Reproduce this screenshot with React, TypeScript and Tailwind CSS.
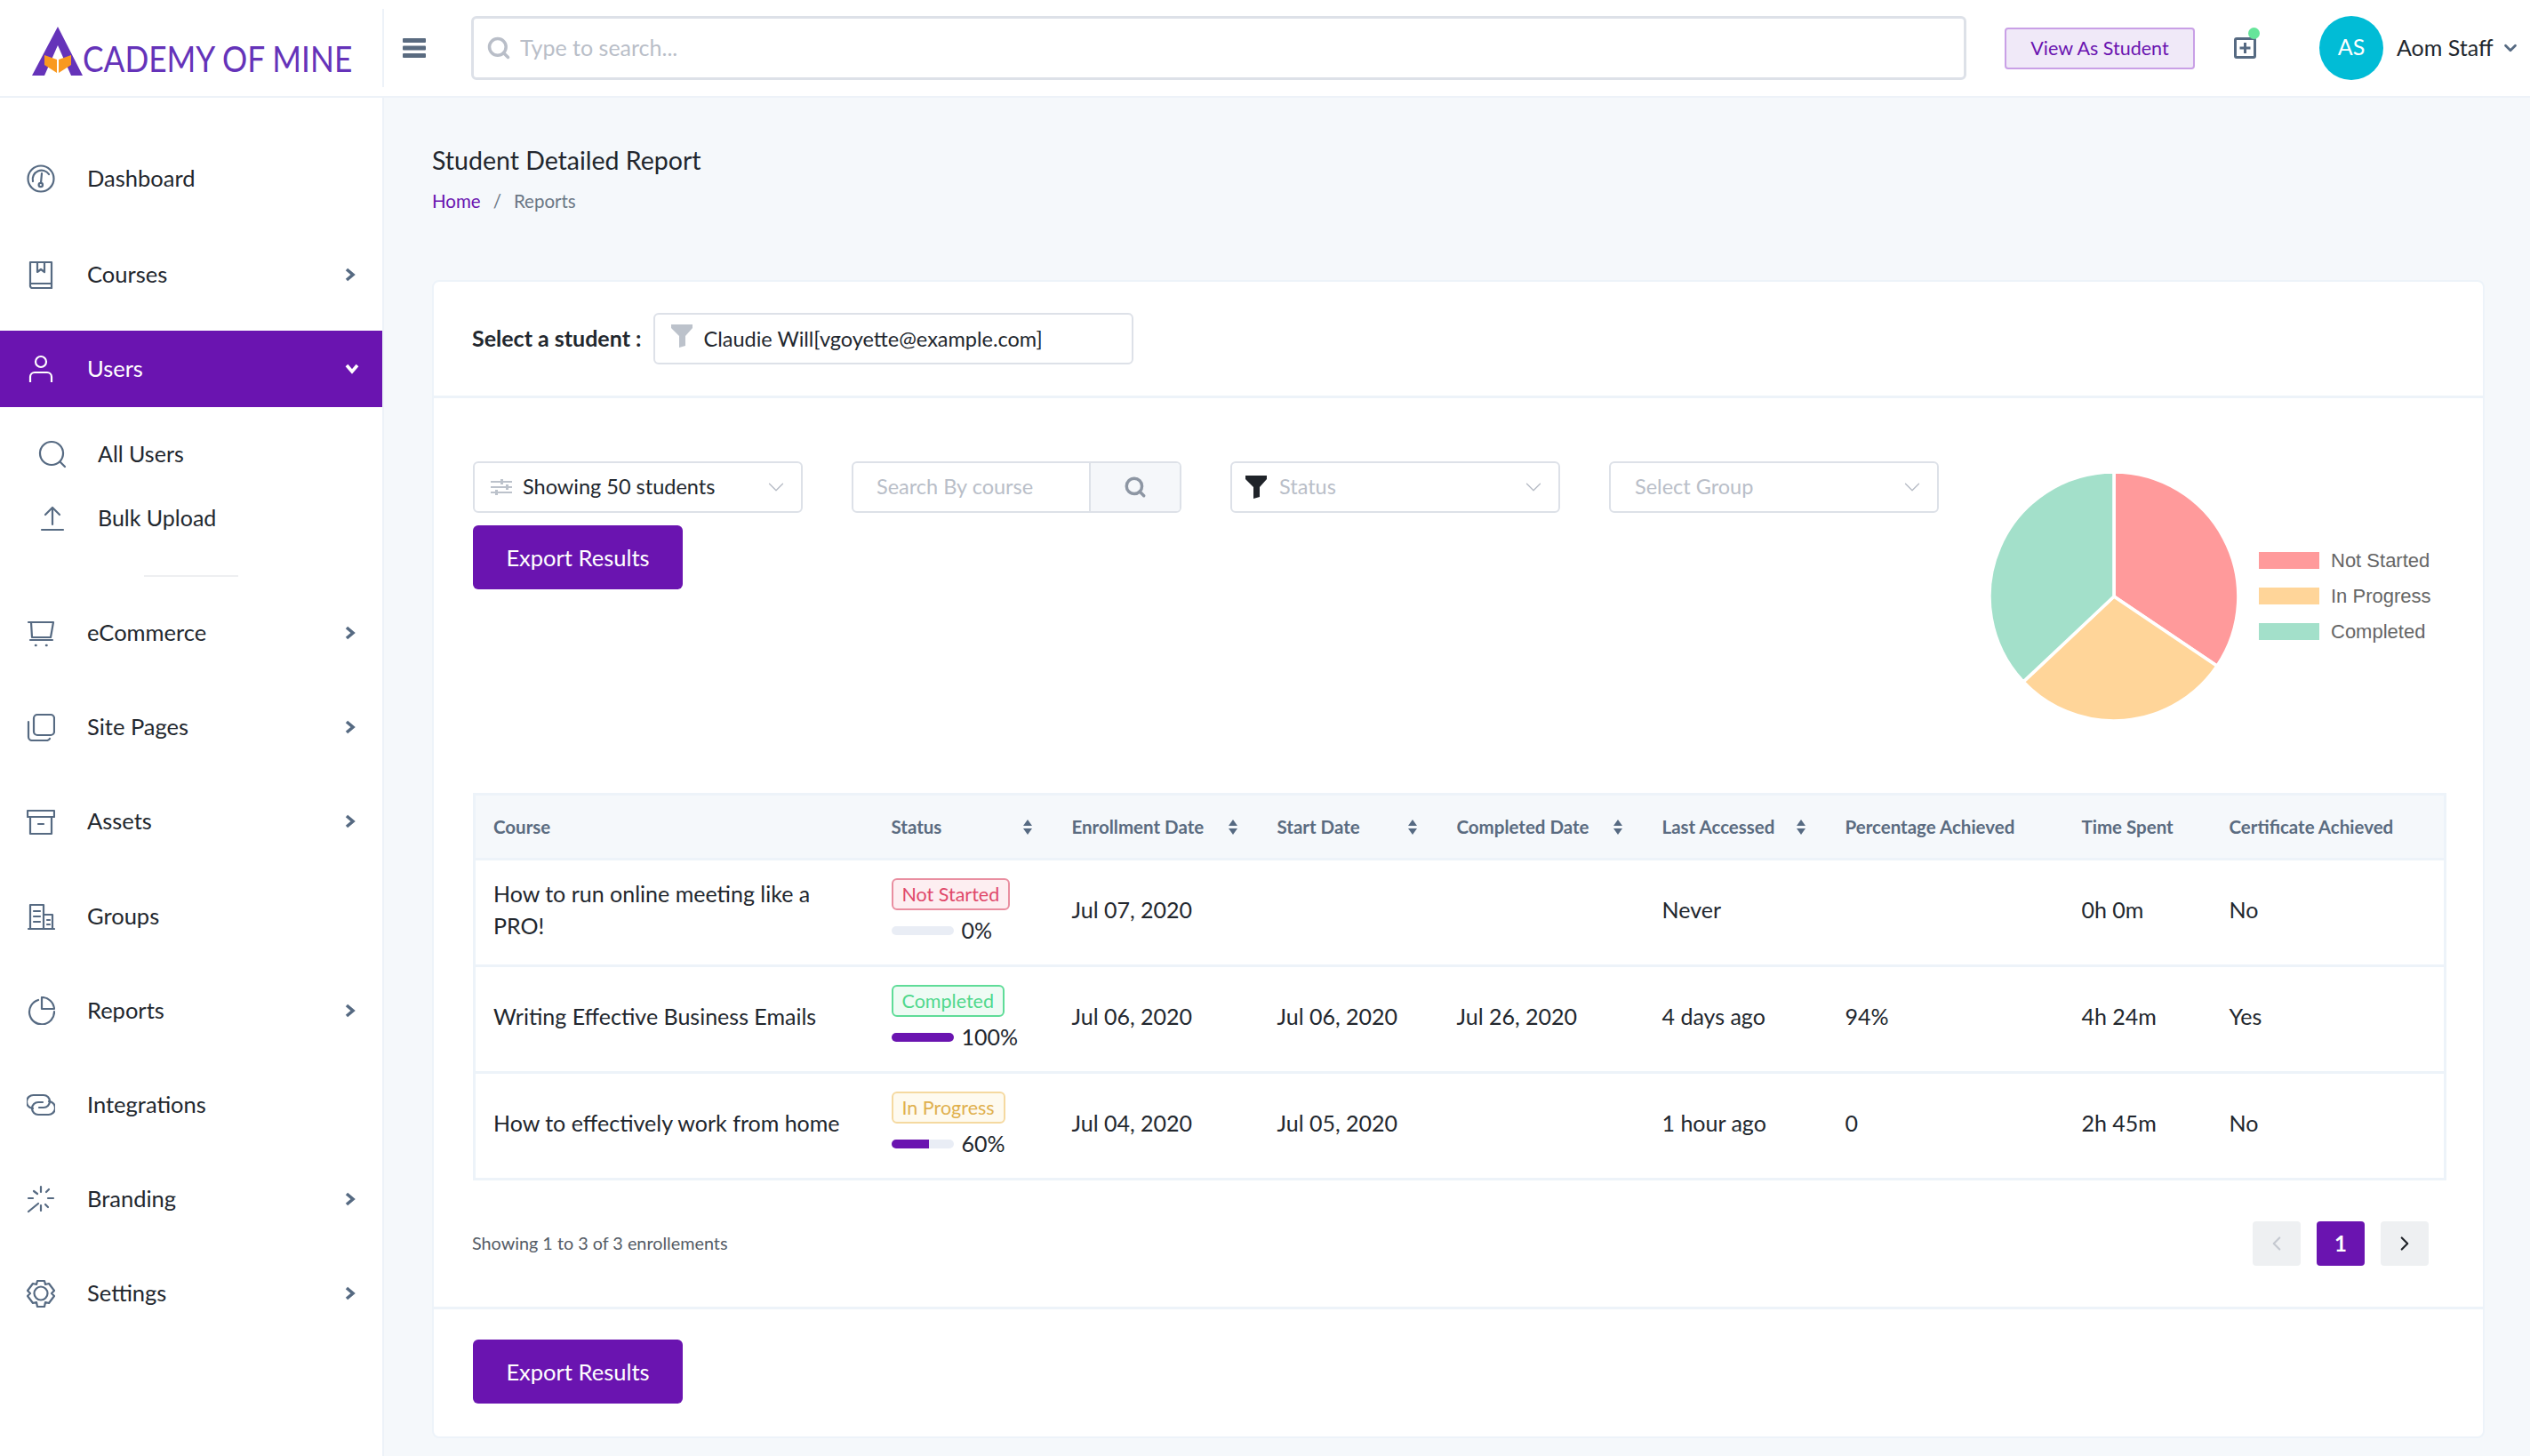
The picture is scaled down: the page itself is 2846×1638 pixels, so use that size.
import { ChevronDown, ChevronLeft, ChevronRight, Search } from "lucide-react";
import type { ReactNode } from "react";

const LINE = "#566a82";

function Ico({ children, className = "" }: { children: ReactNode; className?: string }) {
  return (
    <svg viewBox="0 0 32 32" fill="none" stroke={LINE} strokeWidth="2.2" strokeLinecap="round" strokeLinejoin="round" className={`h-8 w-8 shrink-0 ${className}`}>
      {children}
    </svg>
  );
}

const icons: Record<string, ReactNode> = {
  dashboard: (
    <Ico>
      <circle cx="16" cy="16" r="14.5" />
      <path d="M7 19a10 10 0 0 1 18 -8" />
      <path d="M17 10l-1 11" />
      <circle cx="15.8" cy="23" r="2.2" />
    </Ico>
  ),
  courses: (
    <Ico>
      <path d="M4 28V2h24v29H6a2.5 2.5 0 0 1 -2 -3z" />
      <path d="M4 26h24" />
      <path d="M12 2v11l4 -3 4 3V2" />
    </Ico>
  ),
  user: (
    <Ico>
      <circle cx="16" cy="8" r="6" />
      <path d="M4 31v-6a5 5 0 0 1 5 -5h14a5 5 0 0 1 5 5v6" />
    </Ico>
  ),
  allUsers: (
    <Ico>
      <circle cx="15" cy="15" r="13" />
      <path d="M25 25l5 5" />
    </Ico>
  ),
  upload: (
    <Ico>
      <path d="M4 29h24" />
      <path d="M16 23V6" />
      <path d="M8 12l8 -8 8 8" />
    </Ico>
  ),
  cart: (
    <Ico>
      <path d="M2 4h28l-3 17H6L5 4" />
      <path d="M4 24h25" />
      <path d="M10 30h.5M22 30h.5" strokeWidth="2.5" />
    </Ico>
  ),
  copy: (
    <Ico>
      <rect x="8" y="2" width="23" height="23" rx="4" />
      <path d="M2 10v17a4 4 0 0 0 4 4h17a4 4 0 0 0 3 -2" />
    </Ico>
  ),
  archive: (
    <Ico>
      <path d="M1 4h30v7H1z" />
      <path d="M4 11v19h24V11" />
      <path d="M13 19h6" />
    </Ico>
  ),
  building: (
    <Ico>
      <path d="M2 30h29" />
      <path d="M4 30V3h15v27" />
      <path d="M19 14h10v16" />
      <path d="M8 10h7M8 16h7M8 22h7M23 20h3M23 25h3" />
    </Ico>
  ),
  pie: (
    <Ico>
      <path d="M13 4a14 14 0 1 0 18 13" />
      <path d="M17 1a14 14 0 0 1 14 13H17z" />
    </Ico>
  ),
  link: (
    <Ico>
      <path d="M7 20A7.5 7.5 0 0 1 8 5h11a7 7 0 0 1 0 14h-5" />
      <path d="M25 12a7.5 7.5 0 0 1 -1 15H13a7 7 0 0 1 0 -14h5" />
    </Ico>
  ),
  branding: (
    <Ico>
      <path d="M16 2v6M16 23v6M24 15h6M2 15h5M22 8l3 -3M21 22l3 3M8 7l4 3M2 30l11 -9" />
    </Ico>
  ),
  settings: (
    <Ico>
      <circle cx="16" cy="16" r="7.5" />
      <path d="M12 2h8l1 4 4 -1 6 8-3 3 3 3-6 8-4 -1-1 5h-8l-1 -5-4 1-6 -8 3 -3-3 -3 6 -8 4 1z" />
    </Ico>
  ),
};

function NavChevron({ white }: { white?: boolean }) {
  return white ? (
    <svg viewBox="0 0 16 12" className="h-[12px] w-[16px]" fill="none" stroke="#fff" strokeWidth="3.6">
      <path d="M2 2l6 7 6 -7" />
    </svg>
  ) : (
    <svg viewBox="0 0 12 16" className="h-[16px] w-[12px]" fill="none" stroke={LINE} strokeWidth="3.6">
      <path d="M2 2l7 6 -7 6" />
    </svg>
  );
}

function NavRow({ icon, label, arrow = true }: { icon: string; label: string; arrow?: boolean }) {
  return (
    <div className="flex h-[106px] items-center pl-[30px] pr-[30px]">
      {icons[icon]}
      <span className="ml-9 -mt-[2px] flex-1 text-[25.5px] text-[#22272e]">{label}</span>
      {arrow && <NavChevron />}
    </div>
  );
}

function SortIcon() {
  return (
    <svg viewBox="0 0 12 17" className="h-[17px] w-[12px] shrink-0" fill="#566a82">
      <path d="M6 0l5 7H1zM6 17l5 -7H1z" />
    </svg>
  );
}

function Funnel({ color }: { color: string }) {
  return (
    <svg viewBox="0 0 24 26" className="h-[26px] w-[24px] shrink-0" fill={color}>
      <path d="M0 0h24v4l-8 9v11l-7 2V13L0 4z" />
    </svg>
  );
}

function Select({ label, placeholder = true, left, pad = "pl-[18px]" }: { label: string; placeholder?: boolean; left?: ReactNode; pad?: string }) {
  return (
    <div className={`flex h-[58px] w-[371px] items-center rounded-md border-2 border-[#dde1e8] bg-white pr-[13px] ${pad}`}>
      {left}
      <span className={`flex-1 text-[23.5px] ${placeholder ? "text-[#b9bec8]" : "text-[#22272e]"}`}>{label}</span>
      <ChevronDown className="h-[30px] w-[30px] text-[#b5bac4]" strokeWidth={1} />
    </div>
  );
}

function ExportButton() {
  return (
    <button type="button" className="flex h-[72px] w-[236px] items-center justify-center rounded-md bg-[#6a14b0] text-[25.5px] text-white">
      Export Results
    </button>
  );
}

const BADGE = {
  "Not Started": "border-[#e98ea0] bg-[#fdeef1] text-[#e0486a]",
  Completed: "border-[#5fdc98] bg-[#eefbf4] text-[#4fd88c]",
  "In Progress": "border-[#f5d9a0] bg-[#fefaef] text-[#e0b04d]",
};

const ROWS = [
  { course: "How to run online meeting like a PRO!", status: "Not Started", pct: 0, enrolled: "Jul 07, 2020", start: "", done: "", last: "Never", score: "", time: "0h 0m", cert: "No" },
  { course: "Writing Effective Business Emails", status: "Completed", pct: 100, enrolled: "Jul 06, 2020", start: "Jul 06, 2020", done: "Jul 26, 2020", last: "4 days ago", score: "94%", time: "4h 24m", cert: "Yes" },
  { course: "How to effectively work from home", status: "In Progress", pct: 60, enrolled: "Jul 04, 2020", start: "Jul 05, 2020", done: "", last: "1 hour ago", score: "0", time: "2h 45m", cert: "No" },
] as const;

const COLS: { label: string; w: number; sort?: boolean }[] = [
  { label: "Course", w: 448 },
  { label: "Status", w: 202, sort: true },
  { label: "Enrollment Date", w: 231, sort: true },
  { label: "Start Date", w: 202, sort: true },
  { label: "Completed Date", w: 231, sort: true },
  { label: "Last Accessed", w: 206, sort: true },
  { label: "Percentage Achieved", w: 266 },
  { label: "Time Spent", w: 166 },
  { label: "Certificate Achieved", w: 265 },
];

function Pie() {
  const r = 139;
  const pt = (deg: number) => {
    const a = (deg * Math.PI) / 180;
    return `${(r + r * Math.sin(a)).toFixed(1)} ${(r - r * Math.cos(a)).toFixed(1)}`;
  };
  const slice = (a: number, b: number, c: string) => (
    <path d={`M${r} ${r}L${pt(a)}A${r} ${r} 0 ${b - a > 180 ? 1 : 0} 1 ${pt(b)}Z`} fill={c} stroke="#fff" strokeWidth="3.6" />
  );
  return (
    <svg viewBox="0 0 278 278" className="h-[280px] w-[280px]">
      {slice(0, 124, "#ff9a9b")}
      {slice(124, 226.7, "#ffd599")}
      {slice(226.7, 360, "#a3e0ca")}
    </svg>
  );
}

export default function App() {
  return (
    <div className="flex h-[1638px] w-[2846px] flex-col overflow-hidden bg-[#f5f8fb] font-['Lato',sans-serif] text-[#22272e]">
      <header className="flex h-[110px] shrink-0 items-center border-b-2 border-[#edf2f8] bg-white">
        <div className="flex h-[88px] w-[432px] shrink-0 items-center border-r-2 border-[#edf2f8] pl-[36px]">
          <svg viewBox="0 0 57 55" className="mt-[6px] h-[55px] w-[57px] shrink-0">
            <path d="M29 0L57 55H44L29 21 14 55H0z" fill="#6533b9" />
            <path d="M14 32l14 5v15l-14 -9zM44 32l-14 5v15l14 -9z" fill="#f9991f" />
          </svg>
          <span className="mt-[22px] origin-left scale-x-[0.86] whitespace-nowrap text-[41px] leading-none text-[#6533b9]">CADEMY OF MINE</span>
        </div>
        <svg viewBox="0 0 26 22" className="ml-[21px] h-[22px] w-[26px] shrink-0" fill="#5a6b80">
          <rect width="26" height="5" rx="1" />
          <rect y="8.5" width="26" height="5" rx="1" />
          <rect y="17" width="26" height="5" rx="1" />
        </svg>
        <div className="ml-[51px] flex h-[72px] w-[1682px] items-center rounded-md border-[3px] border-[#dde1e8] pl-[14px]">
          <Search className="h-[28px] w-[28px] text-[#b9bec8]" strokeWidth={3} />
          <span className="ml-[10px] text-[25px] text-[#b9bec8]">Type to search...</span>
        </div>
        <button type="button" className="ml-[43px] flex h-[47px] w-[214px] items-center justify-center rounded-[4px] border-2 border-[#c9a0e6] bg-[#f0e9f8] text-[21.5px] text-[#6a14b0]">
          View As Student
        </button>
        <div className="relative ml-[44px] h-[24px] w-[25px] rounded-[3px] border-[3px] border-[#566a82]">
          <svg viewBox="0 0 19 18" className="h-full w-full" stroke="#566a82" strokeWidth="3">
            <path d="M9.5 3v12M3.5 9h12" />
          </svg>
          <span className="absolute -right-[7px] -top-[14px] h-[13px] w-[13px] rounded-full bg-[#66e59a]" />
        </div>
        <div className="ml-[71px] flex h-[72px] w-[72px] items-center justify-center rounded-full bg-[#01bcd6] pb-[2px] text-[25px] text-white">AS</div>
        <span className="ml-[15px] text-[25px] text-[#22272e]">Aom Staff</span>
        <ChevronDown className="ml-[8px] h-[22px] w-[22px] text-[#566a82]" strokeWidth={3} />
      </header>

      <div className="flex min-h-0 flex-1">
        <aside className="w-[432px] shrink-0 border-r-2 border-[#edf2f8] bg-white pt-[38px]">
          <NavRow icon="dashboard" label="Dashboard" arrow={false} />
          <div className="h-[2px]" />
          <NavRow icon="courses" label="Courses" />
          <div className="my-[10px] flex h-[86px] items-center bg-[#6a14b0] pl-[30px] pr-[26px] text-white">
            <svg viewBox="0 0 32 32" fill="none" stroke="#fff" strokeWidth="2.2" className="h-8 w-8 shrink-0">
              <circle cx="16" cy="8" r="6" />
              <path d="M4 31v-6a5 5 0 0 1 5 -5h14a5 5 0 0 1 5 5v6" />
            </svg>
            <span className="ml-9 -mt-[2px] flex-1 text-[25.5px]">Users</span>
            <NavChevron white />
          </div>
          <div className="pt-[7px]">
            <div className="flex h-[72px] items-center pl-[43px]">
              {icons.allUsers}
              <span className="ml-[35px] text-[25px]">All Users</span>
            </div>
            <div className="flex h-[72px] items-center pl-[43px]">
              {icons.upload}
              <span className="ml-[35px] text-[25px]">Bulk Upload</span>
            </div>
          </div>
          <div className="ml-[162px] mt-[28px] h-[2px] w-[106px] bg-[#eeeff1]" />
          <div className="mt-[10px]">
            <NavRow icon="cart" label="eCommerce" />
            <NavRow icon="copy" label="Site Pages" />
            <NavRow icon="archive" label="Assets" />
            <div className="h-[1px]" />
            <NavRow icon="building" label="Groups" arrow={false} />
            <NavRow icon="pie" label="Reports" />
            <NavRow icon="link" label="Integrations" arrow={false} />
            <NavRow icon="branding" label="Branding" />
            <NavRow icon="settings" label="Settings" />
          </div>
        </aside>

        <main className="min-w-0 flex-1 pl-[54px] pr-[51px]">
          <h1 className="mt-[50px] text-[28.5px] leading-[40px] text-[#22272e]">Student Detailed Report</h1>
          <div className="mt-[11px] flex text-[20.5px] leading-[30px] text-[#6b7785]">
            <span className="text-[#6a14b0]">Home</span>
            <span className="mx-[14px]">/</span>
            <span>Reports</span>
          </div>

          <section className="mt-[74px] h-[1303px] rounded-lg border-2 border-[#edf3f9] bg-white">
            <div className="flex h-[131px] items-center border-b-[3px] border-[#edf3f9] pl-[43px]">
              <span className="text-[25px] font-bold text-[#22272e]">Select a student :</span>
              <div className="ml-[14px] flex h-[58px] w-[540px] items-center rounded-md border-2 border-[#dde1e8] pl-[18px]">
                <span className="-mt-[6px] flex"><Funnel color="#bcc2cb" /></span>
                <span className="ml-[12px] mt-[2px] text-[23.5px] text-[#22272e]">Claudie Will[vgoyette@example.com]</span>
              </div>
            </div>

            <div className="flex h-[444px]">
              <div className="w-[1700px] shrink-0 pl-[44px] pt-[71px]">
                <div className="flex gap-[55px]">
                  <Select
                    label="Showing 50 students"
                    placeholder={false}
                    left={
                      <svg viewBox="0 0 24 18" className="mr-[12px] h-[18px] w-[24px] shrink-0" fill="#bcc2cb">
                        <path d="M0 2h24v2H0zM0 8h24v2H0zM0 14h24v2H0zM11 0h3v6h-3zM17 6h3v6h-3zM5 12h3v6H5z" />
                      </svg>
                    }
                  />
                  <div className="flex h-[58px] w-[371px] items-stretch overflow-hidden rounded-md border-2 border-[#dde1e8]">
                    <span className="flex flex-1 items-center pl-[26px] text-[23.5px] text-[#b9bec8]">Search By course</span>
                    <span className="flex w-[102px] items-center justify-center border-l-2 border-[#dde1e8] bg-[#f5f7fa]">
                      <Search className="h-[26px] w-[26px] text-[#8d96a3]" strokeWidth={3.2} />
                    </span>
                  </div>
                  <Select label="Status" left={<span className="mr-[14px] -ml-[3px] flex"><Funnel color="#1f2329" /></span>} />
                  <Select label="Select Group" pad="pl-[27px]" />
                </div>
                <div className="mt-[14px]">
                  <ExportButton />
                </div>
              </div>
              <div className="flex pl-[50px] pt-[83px]">
                <Pie />
                <div className="ml-[23px] mt-[90px] flex flex-col gap-[21px] font-['Liberation_Sans',sans-serif] text-[22px] leading-[19px] text-[#666]">
                  <div className="flex items-center gap-[13px]"><span className="h-[19px] w-[68px] bg-[#ff9a9b]" />Not Started</div>
                  <div className="flex items-center gap-[13px]"><span className="h-[19px] w-[68px] bg-[#ffd599]" />In Progress</div>
                  <div className="flex items-center gap-[13px]"><span className="h-[19px] w-[68px] bg-[#a3e0ca]" />Completed</div>
                </div>
              </div>
            </div>

            <div className="px-[44px]">
              <table className="w-[2217px] table-fixed border-collapse border-[3px] border-[#edf3f9]">
                <colgroup>
                  {COLS.map((c) => (
                    <col key={c.label} style={{ width: c.w }} />
                  ))}
                </colgroup>
                <thead>
                  <tr className="h-[73px] bg-[#f5f8fb]">
                    {COLS.map((c, i) => (
                      <th key={c.label} className={`pr-[22px] text-left text-[20.5px] font-bold text-[#5a6b80] ${i === 0 ? "pl-[20px]" : i === 1 ? "pl-[21px]" : "pl-[22px]"}`}>
                        <div className="flex items-center justify-between whitespace-nowrap">
                          {c.label}
                          {c.sort && <SortIcon />}
                        </div>
                      </th>
                    ))}
                  </tr>
                </thead>
                <tbody className="text-[25px] text-[#22272e]">
                  {ROWS.map((r) => (
                    <tr key={r.course} className="h-[120px] border-t-[3px] border-[#edf3f9]">
                      <td className="pb-[7px] pl-[20px] pr-[22px] leading-[36px]">{r.course}</td>
                      <td className="pb-[5px] pl-[21px] pr-[22px]">
                        <span className={`inline-block h-[36px] rounded-md border-2 px-[10px] text-[21.5px] leading-[32px] ${BADGE[r.status]}`}>{r.status}</span>
                        <div className="mt-[8px] flex h-[30px] items-center whitespace-nowrap">
                          <div className="h-[10px] w-[70px] overflow-hidden rounded-full bg-[#e9edf5]">
                            <div className="h-full bg-[#6a14b0]" style={{ width: `${r.pct}%` }} />
                          </div>
                          <span className="ml-[9px]">{r.pct}%</span>
                        </div>
                      </td>
                      <td className="px-[22px] pb-[5px]">{r.enrolled}</td>
                      <td className="px-[22px] pb-[5px]">{r.start}</td>
                      <td className="px-[22px] pb-[5px]">{r.done}</td>
                      <td className="px-[22px] pb-[5px]">{r.last}</td>
                      <td className="px-[22px] pb-[5px]">{r.score}</td>
                      <td className="px-[22px] pb-[5px]">{r.time}</td>
                      <td className="px-[22px] pb-[5px]">{r.cert}</td>
                    </tr>
                  ))}
                </tbody>
              </table>
            </div>

            <div className="flex h-[145px] items-center justify-between border-b-[3px] border-[#edf3f9] pl-[43px] pr-[61px]">
              <span className="text-[19.8px] text-[#555c66]">Showing 1 to 3 of 3 enrollements</span>
              <div className="flex gap-[18px]">
                <span className="flex h-[50px] w-[54px] items-center justify-center rounded-[4px] bg-[#eef0f2]">
                  <ChevronLeft className="h-[26px] w-[26px] text-[#c5c9d0]" strokeWidth={2} />
                </span>
                <span className="flex h-[50px] w-[54px] items-center justify-center rounded-[4px] bg-[#6a14b0] text-[24px] font-bold text-white">1</span>
                <span className="flex h-[50px] w-[54px] items-center justify-center rounded-[4px] bg-[#eef0f2]">
                  <ChevronRight className="h-[26px] w-[26px] text-[#1f2329]" strokeWidth={2} />
                </span>
              </div>
            </div>
            <div className="pl-[44px] pt-[34px]">
              <ExportButton />
            </div>
          </section>
        </main>
      </div>
    </div>
  );
}
